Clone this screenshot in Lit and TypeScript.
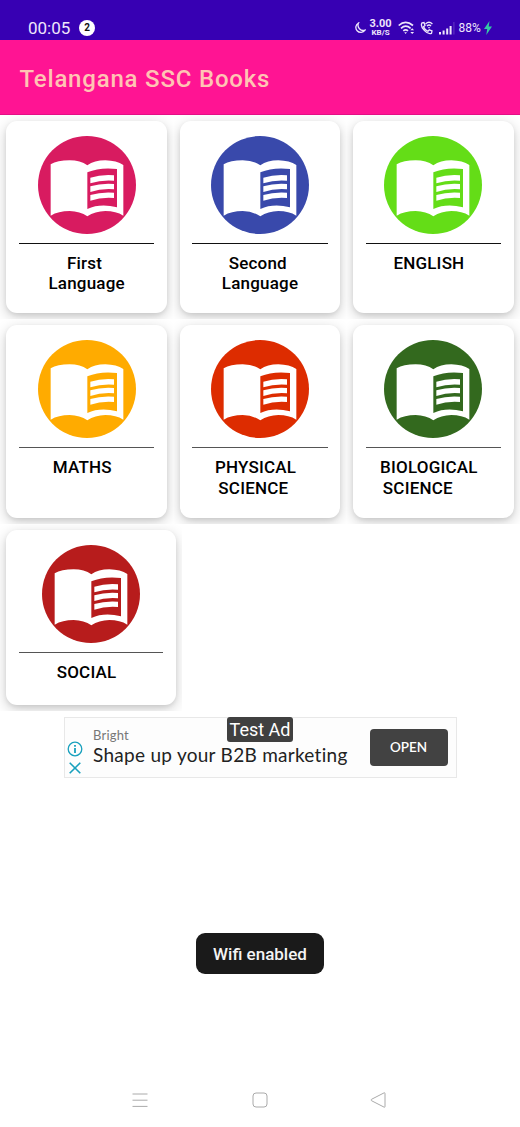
import { LitElement, html, svg, css } from "lit";
import { customElement, property } from "lit/decorators.js";

interface Subject {
  lines: string[];
  color: string;
}

const ROWS: { kind: string; items: Subject[] }[] = [
  {
    kind: "first",
    items: [
      { lines: ["First ", "Language"], color: "#d81b60" },
      { lines: ["Second ", "Language"], color: "#3949ab" },
      { lines: ["ENGLISH  "], color: "#64dd17" },
    ],
  },
  {
    kind: "second",
    items: [
      { lines: ["MATHS  "], color: "#ffab00" },
      { lines: ["PHYSICAL  ", "SCIENCE   "], color: "#dd2c00" },
      { lines: ["BIOLOGICAL  ", "SCIENCE       "], color: "#33691e" },
    ],
  },
  { kind: "third", items: [{ lines: ["SOCIAL  "], color: "#b71c1c" }] },
];

@customElement("subject-card")
export class SubjectCard extends LitElement {
  @property({ attribute: false }) subject!: Subject;

  static styles = css`
    :host {
      display: block;
      box-sizing: border-box;
      padding: 6px 6.3px 6.3px;
      overflow: hidden;
    }
    .card {
      box-sizing: border-box;
      height: 100%;
      border-radius: 11px;
      background: #fff;
      box-shadow: 0 2px 4px rgba(0, 0, 0, 0.07), 0 4px 14px rgba(0, 0, 0, 0.2);
      padding: 15px 12.7px 0;
      display: flex;
      flex-direction: column;
      align-items: center;
    }
    .icon {
      width: 98px;
      height: 98px;
      display: block;
    }
    .rule {
      align-self: stretch;
      height: 1px;
      margin: 9px 0;
      background: var(--rule, #111);
    }
    .line {
      white-space: pre;
      text-align: center;
      font: 500 17px/20.4px Roboto, sans-serif;
      letter-spacing: 0.2px;
      color: #000;
    }
  `;

  render() {
    const { color, lines } = this.subject;
    return html`<div class="card">
      <svg class="icon" viewBox="113 78 294 294">
        <circle cx="260" cy="225" r="147" fill=${color} />
        <path
          fill="#fff"
          d="M151 163Q171 151 208 151Q240 151 261 166Q282 151 315 151Q349 152 369 165V317Q347 303 315 303Q284 304 261 319Q239 304 208 303Q174 303 151 317Z"
        />
        <path fill=${color} d="M261 187Q299 171 350 177V292Q300 279 261 297Z" />
        ${[0, 26, 52].map(
          (dy) =>
            svg`<path fill="#fff" transform="translate(0 ${dy})" d="M270 203Q303 193 341 196V212Q303 209 270 220Z" />`
        )}
      </svg>
      <div class="rule"></div>
      ${lines.map((l) => html`<div class="line">${l}</div>`)}
    </div>`;
  }
}

@customElement("app-root")
export class AppRoot extends LitElement {
  static styles = css`
    :host {
      display: flex;
      flex-direction: column;
      position: relative;
      width: 520px;
      height: 1127px;
      overflow: hidden;
      background: #fff;
      font-family: Roboto, sans-serif;
    }
    svg {
      display: block;
      flex: none;
    }
    .status {
      box-sizing: border-box;
      height: 40.4px;
      flex: none;
      background: #3700b3;
      color: #eee6fb;
      display: flex;
      align-items: center;
      padding: 16px 28px 0 28px;
    }
    .time {
      font-size: 17px;
      line-height: 24px;
      width: 51px;
    }
    .count {
      width: 16px;
      height: 16px;
      border-radius: 50%;
      background: #fff;
      color: #111;
      font: 700 10px/16px Roboto, sans-serif;
      text-align: center;
    }
    .tray {
      display: flex;
      align-items: center;
      margin-left: auto;
      margin-right: 0.5px;
    }
    .speed {
      width: 22px;
      margin: 0 6px 0 4px;
      display: grid;
      justify-items: center;
      font: 700 11px/9.5px Roboto, sans-serif;
    }
    .unit {
      font-size: 8px;
      line-height: 9px;
    }
    .battery {
      font-size: 12px;
      width: 25px;
      white-space: nowrap;
    }
    .bar {
      height: 74.6px;
      box-sizing: border-box;
      flex: none;
      background: #ff1493;
      border-bottom: 1px solid #e30f86;
      color: #ffc4b4;
      padding: 4px 19.5px 0;
      display: flex;
      align-items: center;
      font-size: 24px;
      font-weight: 500;
      letter-spacing: 0.8px;
    }
    .row {
      display: grid;
      flex: none;
      grid-template-columns: repeat(3, 1fr);
    }
    .first {
      height: 204.5px;
    }
    .second {
      height: 204.5px;
      --rule: #555;
    }
    .third {
      height: 187px;
      grid-template-columns: 182px;
      --rule: #555;
    }
    .ad {
      position: relative;
      box-sizing: border-box;
      width: 393px;
      height: 61px;
      margin: 6px 0 0 63.5px;
      border: 1px solid #e8e8e8;
      background: #fdfdfd;
      display: flex;
      align-items: center;
      padding: 0 8px 0 2px;
      flex: none;
    }
    .marks {
      display: grid;
      gap: 5px;
      padding-top: 21px;
      width: 26.5px;
    }
    .copy {
      flex: 1;
      font-family: Lato, sans-serif;
      white-space: nowrap;
      padding-bottom: 2px;
    }
    .brand {
      font-size: 13px;
      line-height: 18px;
      letter-spacing: 0.2px;
      color: #777;
    }
    .headline {
      font-size: 19px;
      line-height: 22px;
      letter-spacing: 0.28px;
      font-variant-ligatures: none;
      color: #222;
    }
    .open {
      width: 78px;
      height: 37px;
      border-radius: 4px;
      background: #424242;
      color: #fff;
      font: 600 13.5px/36px Lato, sans-serif;
      text-align: center;
    }
    .badge {
      position: absolute;
      left: 162.5px;
      top: -1px;
      width: 66px;
      height: 25px;
      border-radius: 3px;
      background: #404040;
      color: #fff;
      font-size: 18px;
      line-height: 26px;
      text-align: center;
      white-space: nowrap;
    }
    .toast {
      margin: 155px auto 0;
      width: 128px;
      height: 41.5px;
      flex: none;
      border-radius: 9px;
      background: #1a1a1a;
      color: #f4f4f4;
      font-size: 17px;
      font-weight: 500;
      line-height: 43px;
      text-align: center;
      white-space: nowrap;
    }
    .nav {
      margin-top: auto;
      height: 54px;
      padding: 0 134px 0 132px;
      display: flex;
      align-items: center;
      justify-content: space-between;
    }
    .home {
      margin-left: 2px;
    }
  `;

  render() {
    return html`
      <div class="status">
        <span class="time">00:05</span>
        <span class="count">2</span>
        <div class="tray">
          <svg width="12" height="12" viewBox="0 0 12 12" fill="none" stroke="#eee6fb" stroke-width="1.3">
            <path d="M4.5 1A5 5 0 1 0 11 8.2A5.3 5.3 0 0 1 4.5 1Z" />
          </svg>
          <div class="speed"><div>3.00</div><div class="unit">KB/S</div></div>
          <svg width="17" height="14" viewBox="0 0 17 14" fill="none" stroke="#eee6fb" stroke-width="1.7">
            <path d="M.7 4.5Q7.5-1.8 15 4.5M3 7.3Q7.7 3 12.6 7.3M5.3 9.8Q7.7 7.8 10 9.8" />
            <path d="M6.2 11.2H9L7.6 13Z" fill="#eee6fb" stroke="none" />
            <path d="M12.3 9.3L14.2 7.3L16.1 9.3ZM12.3 11L14.2 13L16.1 11Z" fill="#eee6fb" stroke="none" />
          </svg>
          <svg width="24" height="14" viewBox="-5 0 24 14" fill="none" stroke="#eee6fb" stroke-width="1.3">
            <path d="M2 1.8L4 1.5L5 4.5L3.5 5.8Q4.8 9 8 10.3L9.3 8.8L12 10L11.5 12.3Q8.5 13.8 4.5 9.6Q0 5 2 1.8Z" />
            <path d="M5.5 3Q9-.4 12.4 3M7 5Q9 3 11 5M8.3 6.6H9.7" />
          </svg>
          <svg width="20" height="14" viewBox="0 0 20 14" fill="#eee6fb">
            <path d="M0 11H2V13.5H0ZM3.6 9.5H5.6V13.5H3.6ZM7.2 7.5H9.2V13.5H7.2ZM10.6 5H12.6V13.5H10.6Z" />
            <path opacity=".25" d="M14.4 1H15.4V13.5H14.4Z" />
          </svg>
          <span class="battery">88%</span>
          <svg width="8" height="14" viewBox="0 0 8 14"><path fill="#35c8a4" d="M5.5 0L0 8H3.2L2.3 14L8 5.6H4.7Z" /></svg>
        </div>
      </div>
      <div class="bar">Telangana SSC Books</div>
      ${ROWS.map(
        (r) => html`<div class="row ${r.kind}">
          ${r.items.map((s) => html`<subject-card .subject=${s}></subject-card>`)}
        </div>`
      )}
      <div class="ad">
        <div class="marks">
          <svg width="16" height="16" viewBox="0 0 16 16" fill="none" stroke="#18a0bd" stroke-width="1.3">
            <circle cx="8" cy="8" r="6.8" />
            <path stroke-width="1.8" d="M8 7V12M8 4V5.8" />
          </svg>
          <svg width="16" height="12" viewBox="0 0 16 12" stroke="#18a0bd" stroke-width="1.6">
            <path d="M2.7.7L13.3 11.3M13.3.7L2.7 11.3" />
          </svg>
        </div>
        <div class="copy">
          <div class="brand">Bright</div>
          <div class="headline">Shape up your B2B marketing</div>
        </div>
        <div class="open">OPEN</div>
        <div class="badge">Test Ad</div>
      </div>
      <div class="toast">Wifi enabled</div>
      <div class="nav">
        <svg width="16" height="16" viewBox="0 0 16 16" stroke="#aaa" stroke-width="1"><path d="M.5 2H15.5M.5 8.2H15.5M.5 14.4H15.5" /></svg>
        <svg class="home" width="16" height="16" viewBox="0 0 16 16" fill="none" stroke="#aaa"><rect x="1" y="1" width="14" height="14" rx="3" /></svg>
        <svg width="16" height="16" viewBox="0 0 16 16" fill="none" stroke="#aaa"><path d="M14 .9Q15 .4 15 1.5V14.5Q15 15.6 14 15.1L1.5 8.7Q.3 8 1.5 7.3Z" /></svg>
      </div>
    `;
  }
}
